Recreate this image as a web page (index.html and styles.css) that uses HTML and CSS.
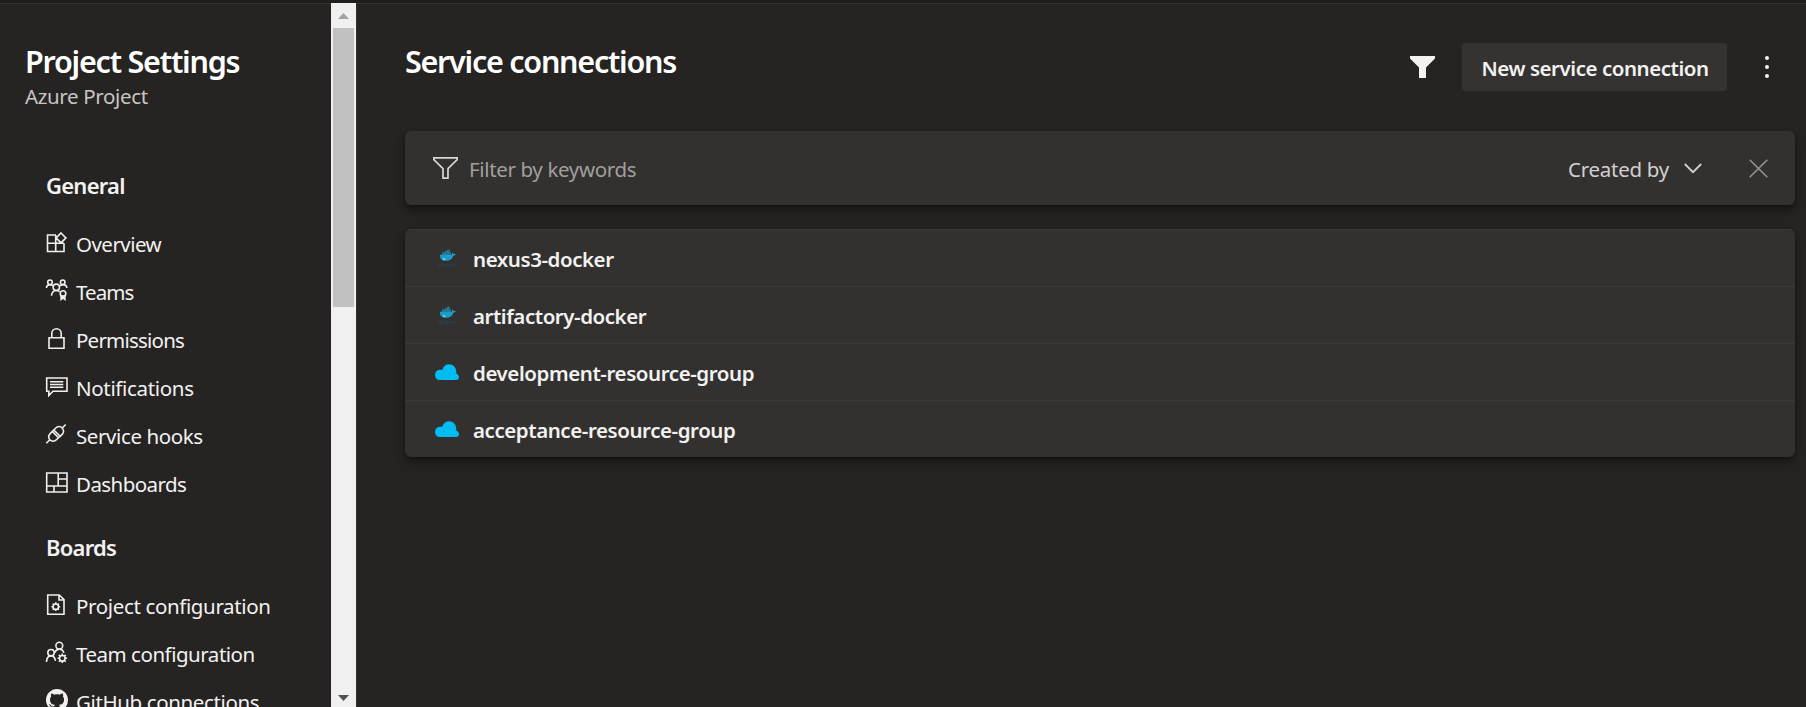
FILE: index.html
```html
<!DOCTYPE html>
<html lang="en">
<head>
<meta charset="utf-8">
<title>Service connections</title>
<link rel="stylesheet" href="styles.css">
</head>
<body>
<div class="topline"></div>
<div class="app">
  <aside class="sidebar">
    <h1 class="title"><span class="t ls-settings">Project Settings</span></h1>
    <p class="project"><span class="t ls-azure">Azure Project</span></p>
    <h2 class="group"><span class="t ls-general">General</span></h2>
    <nav class="nav">
      <a class="item"><svg class="icon" viewBox="0 0 24 24"><path d="M11 5H2.500v16.500H19v-8.200M10.700 5v16.500M2.500 13.300H19M16 3l4.900 4.900-4.900 4.900-4.900-4.900z"/></svg><span class="t ls-overview">Overview</span></a>
      <a class="item"><svg class="icon" viewBox="0 0 24 24"><circle cx="5" cy="4.300" r="2.300"/><circle cx="17.700" cy="4.300" r="2.300"/><circle cx="11.300" cy="9.300" r="3.200"/><path d="M1.400 10c.3-2.200 1.700-3.400 3.600-3.400 1.200 0 2.200.5 2.900 1.300M21.900 10c-.3-2.200-1.900-3.400-3.900-3.400-1.200 0-2.300.5-3 1.300M6.500 17.800c.3-3.300 2.100-5.300 4.800-5.300 1.300 0 2.400.4 3.200 1.200"/><circle cx="18" cy="15.600" r="2.800"/><path class="solid" d="M15.300 17.500h5.400V23L18 21l-2.700 2z"/></svg><span class="t ls-teams">Teams</span></a>
      <a class="item"><svg class="icon" viewBox="0 0 24 24"><path d="M4 11.700h15v10.600H4zM6.800 11.700V7.500a4.700 4.700 0 0 1 9.400 0v4.200"/></svg><span class="t ls-permissions">Permissions</span></a>
      <a class="item"><svg class="icon" viewBox="0 0 24 24"><path d="M1.700 4H22v13.300H8l-4.200 4.200v-4.200H1.700zM5 7.700h13.300M5 10.500h13.300M5 13.300h13.300"/></svg><span class="t ls-notifications">Notifications</span></a>
      <a class="item"><svg class="icon" viewBox="0 0 24 24"><path d="M1.300 21.300l3.500-3.500M17.200 6l3.500-3.500M4.800 17.800c-1.500-2-1.200-4.600.4-6.200L7.300 9.500l6.200 6.200-2.100 2.100c-1.800 1.800-4.800 1.900-6.600 0zM8.800 8l2-2c1.800-1.800 4.600-1.800 6.400 0s1.800 4.600 0 6.400l-2 2zM7.300 9.500L8.800 8M13.500 15.700l1.500-1.500"/></svg><span class="t ls-hooks">Service hooks</span></a>
      <a class="item"><svg class="icon" viewBox="0 0 24 24"><path d="M1.700 3H22v19H1.700zM13.200 3v13M1.700 16H22M13.200 9H22M9 16v6"/></svg><span class="t ls-dashboards">Dashboards</span></a>
    </nav>
    <h2 class="group group-boards"><span class="t ls-boards">Boards</span></h2>
    <nav class="nav">
      <a class="item"><svg class="icon" viewBox="0 0 24 24"><path d="M2.700 3h11.600l4.700 4.700v14.600H2.700zM14 3v5h5"/><circle cx="10.800" cy="14.700" r="2.700"/><path d="M10.800 10.300V12M10.800 17.400v1.700M6.400 14.700h1.700M13.500 14.700h1.700M7.700 11.600l1.200 1.200M12.700 16.600l1.200 1.200M13.900 11.600l-1.200 1.200M8.900 16.600l-1.200 1.200"/></svg><span class="t ls-projconf">Project configuration</span></a>
      <a class="item"><svg class="icon" viewBox="0 0 24 24"><circle cx="14.300" cy="5.700" r="3.400"/><circle cx="6" cy="12.700" r="3.200"/><path d="M1.500 22c.2-3.700 1.900-6.100 4.500-6.100 2.400 0 4 1.800 4.500 4.900M9.700 12.700c.9-2.200 2.400-3.600 4.500-3.600 2.300 0 4 1.400 4.700 3.700"/><circle cx="17.300" cy="18.300" r="2.800"/><path d="M17.300 13.500v2M17.300 21.100v2M12.500 18.300h2M20.100 18.300h2M13.900 14.900l1.400 1.400M19.300 20.300l1.400 1.400M20.700 14.900l-1.400 1.400M15.300 20.300l-1.400 1.400"/></svg><span class="t ls-teamconf">Team configuration</span></a>
      <a class="item"><svg class="icon github" viewBox="0 0 16 16"><path d="M8 0C3.580 0 0 3.580 0 8c0 3.540 2.290 6.530 5.470 7.590.4.070.55-.17.55-.38 0-.19-.01-.82-.01-1.490-2.010.37-2.530-.49-2.690-.94-.09-.23-.48-.94-.82-1.130-.28-.15-.68-.52-.01-.53.63-.01 1.080.58 1.230.82.72 1.210 1.870.87 2.330.66.07-.52.28-.87.51-1.070-1.780-.2-3.640-.89-3.640-3.950 0-.87.31-1.590.82-2.150-.08-.2-.36-1.020.08-2.120 0 0 .67-.21 2.200.82.64-.18 1.320-.27 2-.27s1.360.09 2 .27c1.530-1.040 2.200-.82 2.200-.82.44 1.100.16 1.920.08 2.120.51.56.82 1.270.82 2.150 0 3.070-1.870 3.750-3.650 3.950.29.25.54.73.54 1.480 0 1.070-.01 1.930-.01 2.200 0 .21.15.46.55.38A8.010 8.010 0 0 0 16 8c0-4.420-3.580-8-8-8z"/></svg><span class="t ls-github">GitHub connections</span></a>
    </nav>
  </aside>
  <div class="scrollbar">
    <svg class="arrow" viewBox="0 0 25 25"><path class="up" d="M7 16l5.500-6 5.500 6z"/></svg>
    <div class="thumb"></div>
    <svg class="arrow" viewBox="0 0 25 25"><path class="down" d="M7 13l5.500 6 5.500-6z"/></svg>
  </div>
  <main class="main">
    <header class="header">
      <h1 class="title"><span class="t ls-service">Service connections</span></h1>
      <div class="actions">
        <svg class="funnel" viewBox="0 0 25 22"><path d="M0 0h25v2.500L16 11.500V22H9V11.500L0 2.500z"/></svg>
        <button class="new"><span class="t ls-new">New service connection</span></button>
        <svg class="more" viewBox="0 0 6 24"><circle cx="3" cy="3" r="2"/><circle cx="3" cy="12" r="2"/><circle cx="3" cy="21" r="2"/></svg>
      </div>
    </header>
    <section class="card filter">
      <svg class="funnel-line" viewBox="0 0 25 22"><path d="M.8.8h23.400v1.700L15 11.700v9.500h-5v-9.500L.8 2.500z"/></svg>
      <span class="placeholder t ls-filter">Filter by keywords</span>
      <span class="created t ls-created">Created by</span>
      <svg class="chevron" viewBox="0 0 18 11"><path d="M.8 1L9 9.200 17.200 1"/></svg>
      <svg class="close" viewBox="0 0 19 19"><path d="M.7.7l17.600 17.600M18.300.7L.7 18.300"/></svg>
    </section>
    <section class="card list">
      <div class="row"><svg class="logo" viewBox="0 0 24 24"><use href="#docker"/></svg><span class="t ls-nexus">nexus3-docker</span></div>
      <div class="row"><svg class="logo" viewBox="0 0 24 24"><use href="#docker"/></svg><span class="t ls-artifactory">artifactory-docker</span></div>
      <div class="row"><svg class="logo" viewBox="0 0 24 24"><use href="#cloud"/></svg><span class="t ls-dev">development-resource-group</span></div>
      <div class="row"><svg class="logo" viewBox="0 0 24 24"><use href="#cloud"/></svg><span class="t ls-acc">acceptance-resource-group</span></div>
    </section>
  </main>
</div>
<svg class="defs">
  <symbol id="docker" viewBox="0 0 24 24">
    <path fill="#27768f" d="M7 6.300h3V4.800h2.300V3.500h2.400v2.800H16V9H7z"/>
    <path fill="#1c9ccb" d="M5 8.700h12.300c-.6-.8-.6-1.700.2-2.300.9.500 1.200 1 1.300 1.700.8-.2 1.500-.1 2 .2-.4 1-1.200 1.400-2.500 1.400-.9 3.200-3.300 5.100-7.300 5.100-4 0-6.300-2.100-6-6.100z"/>
    <path fill="#9ad3e6" d="M7.500 12.500h2.700v1.600H8.500z"/>
    <text x="2.700" y="20.500" font-size="5.500" textLength="18" fill="#2c434c">docker</text>
  </symbol>
  <symbol id="cloud" viewBox="0 0 24 24">
    <path fill="#00bcf2" d="M4.800 20C2 20 0 18.100 0 15c0-3 2-5 4.600-5.200 1-.1 1.900 0 2.600.2C8.300 6.200 10.500 4.200 14 4.200c4.300 0 7.200 3.200 7.300 7.600 0 .9.100 1.600.2 2.100 1.500.3 2.500 1.400 2.500 3.100 0 1.800-1.200 3-3 3z"/>
  </symbol>
</svg>
</body>
</html>
```
FILE: styles.css
```css
* { box-sizing: border-box; }
body {
  margin: 0;
  height: 707px;
  overflow: hidden;
  display: flex;
  flex-direction: column;
  background: #252423;
  color: #f3f2f1;
  font-family: "Noto Sans", "Open Sans", sans-serif;
  font-size: 20.5px;
}
h1, h2, p { margin: 0; }
.t { white-space: nowrap; }
.topline { flex: none; height: 4px; background: #201f1e; border-bottom: 1px solid #343332; }
.app { flex: 1; min-height: 0; display: flex; }
.sidebar { width: 331px; flex: none; overflow: hidden; padding: 36px 0 0 25px; }
.title { font-size: 30.5px; font-weight: 600; line-height: 42px; color: #fff; }
.project { line-height: 28px; color: #c8c6c4; }
.group { margin: 60px 0 0 21px; font-size: 22px; font-weight: 600; line-height: 30px; }
.group-boards { margin-top: 24px; }
.nav { padding: 20px 0 0 20px; }
.item { display: flex; align-items: center; height: 48px; gap: 7px; }
.row .t, .filter .t { padding-top: 2px; }
.icon { width: 24px; height: 24px; flex: none; margin-bottom: 4px; fill: none; stroke: #f0efee; stroke-width: 1.600; }
.icon .solid { fill: #f0efee; stroke: none; }
.github { width: 22px; height: 22px; margin: 0 1px 4px; fill: #f3f2f1; stroke: none; }
.scrollbar { flex: none; width: 25px; margin-top: -1px; display: flex; flex-direction: column; background: #f0f0f0; }
.arrow { width: 25px; height: 25px; flex: none; }
.arrow:last-child { margin-top: auto; }
.up { fill: #a3a3a3; }
.down { fill: #505050; }
.thumb { height: 279px; margin: 0 2px; background: #c1c1c1; }
.main { flex: 1; min-width: 0; padding: 36px 11px 0 48px; border-left: 1px solid #323130; }
.header { display: flex; justify-content: space-between; height: 91px; }
.actions { display: flex; align-items: center; height: 48px; margin: 3px 25px 0 0; }
.funnel { width: 25px; height: 22px; margin-right: 27px; fill: #f3f2f1; }
.new { width: 265px; height: 48px; margin-right: 37px; padding: 2px 0 0 19.500px; border: 0; border-radius: 3px; background: #343332; color: inherit; font: 600 20.5px/46px "Noto Sans", "Open Sans", sans-serif; text-align: left; }
.more { width: 6px; height: 24px; fill: #f3f2f1; }
.card { border-radius: 6px; background: #323130; box-shadow: 0 5px 11px rgba(0, 0, 0, .4), 0 1px 3px rgba(0, 0, 0, .3); }
.filter { display: flex; align-items: center; height: 74px; padding: 0 27px 0 28px; }
.funnel-line { width: 25px; height: 22px; fill: none; stroke: #d8d6d4; stroke-width: 1.700; }
.placeholder { margin-left: 11px; color: #a19f9d; }
.created { margin-left: auto; color: #d2d0ce; }
.chevron { width: 18px; height: 11px; margin-left: 15px; fill: none; stroke: #d2d0ce; stroke-width: 1.800; }
.close { width: 19px; height: 19px; margin-left: 47px; fill: none; stroke: #979593; stroke-width: 1.500; }
.list { margin-top: 24px; overflow: hidden; }
.row { display: flex; align-items: center; height: 57px; padding-left: 30px; gap: 14px; border-top: 1px solid #3b3a39; font-weight: 600; }
.logo { width: 24px; height: 24px; flex: none; }
.defs { display: none; }

/* optical tracking per label */
.ls-settings { letter-spacing: -1.220px; }
.ls-service { letter-spacing: -1.250px; }
.ls-azure { letter-spacing: -.35px; }
.ls-general { letter-spacing: -.75px; }
.ls-boards { letter-spacing: -.75px; }
.ls-overview { letter-spacing: -.53px; }
.ls-teams { letter-spacing: -.9px; }
.ls-permissions { letter-spacing: -.78px; }
.ls-notifications { letter-spacing: -.33px; }
.ls-hooks { letter-spacing: -.4px; }
.ls-dashboards { letter-spacing: -.57px; }
.ls-projconf { letter-spacing: -.36px; }
.ls-teamconf { letter-spacing: -.48px; }
.ls-github { letter-spacing: -.38px; }
.ls-new { letter-spacing: -.45px; }
.ls-filter { letter-spacing: -.35px; }
.ls-created { letter-spacing: -.26px; }
.ls-nexus { letter-spacing: -.44px; }
.ls-artifactory { letter-spacing: -.45px; }
.ls-dev { letter-spacing: -.42px; }
.ls-acc { letter-spacing: -.43px; }
```
